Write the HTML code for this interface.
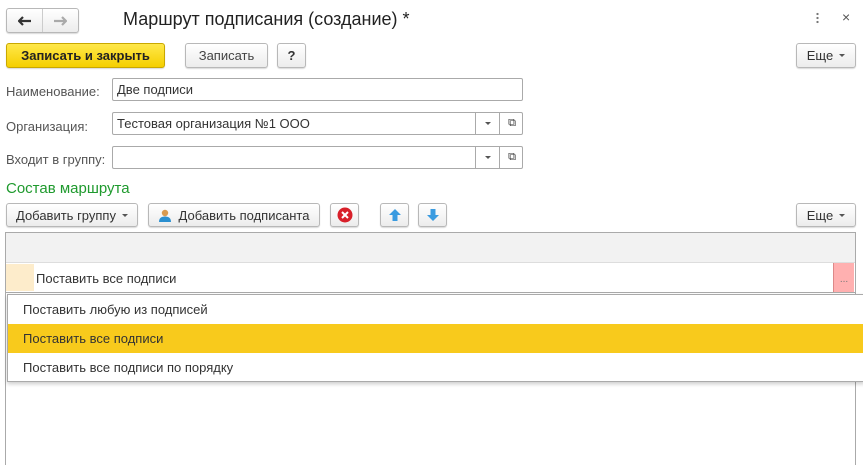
<!DOCTYPE html>
<html style="width:863px;height:465px;overflow:hidden"><head><meta charset="utf-8"><style>
*{box-sizing:border-box;margin:0;padding:0}
body{width:863px;height:465px;background:#fff;font-family:"Liberation Sans",Arial,sans-serif;font-size:13px;color:#333;position:relative;overflow:hidden}
.a{position:absolute}
.btn{position:absolute;height:24px;border:1px solid #b8b8b8;border-radius:3px;background:linear-gradient(#fff,#ececec);box-shadow:0 1px 1px rgba(0,0,0,.15);display:flex;align-items:center;justify-content:center;color:#333;font-size:13px}
.inp{position:absolute;height:23px;border:1px solid #aaa;border-radius:2px;background:#fff;padding-left:4px;line-height:21px;color:#333}
.lbl{position:absolute;color:#555}
.tri{display:inline-block;border-left:3px solid transparent;border-right:3px solid transparent;border-top:3px solid #555;margin-left:6px}
.dd{position:absolute;top:0;width:25px;height:21px;border-left:1px solid #aaa;display:flex;align-items:center;justify-content:center}
</style></head><body>
<div class="btn" style="left:6px;top:8px;width:73px;height:25px;border-radius:3px;padding:0"><div style="width:36px;display:flex;justify-content:center"><svg width="14" height="10"><path d="M1 5H13M5 1L1 5L5 9" stroke="#333" stroke-width="2.2" fill="none"/></svg></div><div style="width:1px;height:23px;background:#ccc"></div><div style="width:36px;display:flex;justify-content:center"><svg width="14" height="10"><path d="M1 5H13M9 1L13 5L9 9" stroke="#aaa" stroke-width="2.2" fill="none"/></svg></div></div>
<div class="a" style="left:123px;top:9px;font-size:18px;color:#222">Маршрут подписания (создание) *</div>
<div class="a" style="left:816px;top:12px;width:3px;height:13px;background:radial-gradient(circle,#777 1px,transparent 1.3px) 0 0/3px 4px"></div>
<div class="a" style="left:842px;top:9px;font-size:14px;color:#555">×</div>
<div class="btn" style="left:6px;top:43px;width:159px;height:25px;background:linear-gradient(#ffe84a,#f5cf00);border-color:#c9a800;font-weight:bold;color:#222">Записать и закрыть</div>
<div class="btn" style="left:185px;top:43px;width:83px;height:25px;color:#444">Записать</div>
<div class="btn" style="left:277px;top:43px;width:29px;height:25px;font-weight:bold;color:#333">?</div>
<div class="btn" style="left:796px;top:43px;width:60px;height:25px">Еще<span class="tri"></span></div>
<div class="lbl" style="left:6px;top:84px">Наименование:</div>
<div class="inp" style="left:112px;top:78px;width:411px">Две подписи</div>
<div class="lbl" style="left:6px;top:119px">Организация:</div>
<div class="inp" style="left:112px;top:112px;width:411px">Тестовая организация №1 ООО<div class="dd" style="left:362px"><span class="tri" style="margin:0"></span></div><div class="dd" style="left:386px;font-size:11px">&#10697;</div></div>
<div class="lbl" style="left:6px;top:152px">Входит в группу:</div>
<div class="inp" style="left:112px;top:146px;width:411px"><div class="dd" style="left:362px"><span class="tri" style="margin:0"></span></div><div class="dd" style="left:386px;font-size:11px">&#10697;</div></div>
<div class="a" style="left:6px;top:180px;font-size:15px;color:#1f9a2e">Состав маршрута</div>
<div class="btn" style="left:6px;top:203px;width:132px">Добавить группу<span class="tri"></span></div>
<div class="btn" style="left:148px;top:203px;width:172px"><svg width="12" height="13" style="margin-right:8px"><circle cx="6" cy="4" r="3.2" fill="#d89a50"/><path d="M0 13 Q0 7.5 6 7.5 Q12 7.5 12 13Z" fill="#2a8fd0"/></svg>Добавить подписанта</div>
<div class="btn" style="left:330px;top:203px;width:29px"><svg width="16" height="16"><circle cx="8" cy="8" r="7.5" fill="#d8202a"/><path d="M5 5L11 11M11 5L5 11" stroke="#fff" stroke-width="2"/></svg></div>
<div class="btn" style="left:380px;top:203px;width:29px"><svg width="14" height="14"><path d="M7 1L13 7H9.5V13H4.5V7H1Z" fill="#3a9be0"/></svg></div>
<div class="btn" style="left:418px;top:203px;width:29px"><svg width="14" height="14"><path d="M7 13L13 7H9.5V1H4.5V7H1Z" fill="#3a9be0"/></svg></div>
<div class="btn" style="left:796px;top:203px;width:60px">Еще<span class="tri"></span></div>
<div class="a" style="left:5px;top:232px;width:851px;height:240px;border:1px solid #aaa;background:#fff"></div>
<div class="a" style="left:6px;top:233px;width:849px;height:30px;background:#f2f2f2;border-bottom:1px solid #ddd"></div>
<div class="a" style="left:6px;top:264px;width:28px;height:27px;background:#fdeccb"></div>
<div class="a" style="left:36px;top:271px;color:#333">Поставить все подписи</div>
<div class="a" style="left:833px;top:263px;width:21px;height:29px;background:#ffb0b0;border-left:1px solid #d88;color:#777;font-size:10px;text-align:center;line-height:34px">...</div>
<div class="a" style="left:5px;top:292px;width:851px;height:1px;background:#aaa"></div>
<div class="a" style="left:7px;top:294px;width:858px;height:88px;background:#fff;border:1px solid #aaa;box-shadow:0 2px 4px rgba(0,0,0,.2)">
<div style="height:29px;line-height:29px;padding-left:15px">Поставить любую из подписей</div>
<div style="height:29px;line-height:29px;padding-left:15px;background:#f8ca1c">Поставить все подписи</div>
<div style="height:29px;line-height:29px;padding-left:15px">Поставить все подписи по порядку</div>
</div>
</body></html>
